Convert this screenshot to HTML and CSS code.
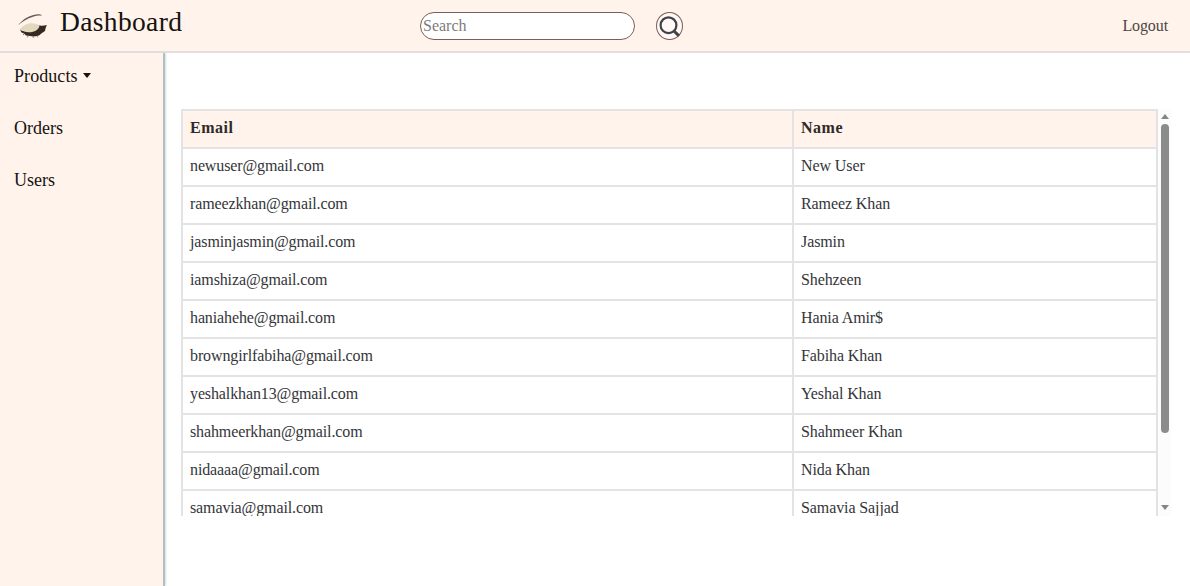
FILE: index.html
```html
<!DOCTYPE html>
<html lang="en">
<head>
<meta charset="utf-8">
<title>Dashboard</title>
<link rel="stylesheet" href="styles.css">
</head>
<body>
<header class="topbar">
  <div class="brand">
    <svg class="logo" width="32" height="28" viewBox="0 0 32 28">
      <defs><filter id="soft"><feGaussianBlur stdDeviation="0.45"/></filter></defs>
      <g filter="url(#soft)">
        <path d="M1 14.200C6 8 13 3.500 22 3.200C24 3.300 25 4 24.500 4.800C22 4.300 19 4.700 16 5.800C10 7.500 6 10.500 1 14.200Z" fill="#665a50"/>
        <path d="M3 18.500C8 21 14 21 18 18.500C21 17 19 14 20 14C24 15.200 27 14.800 29.800 14L28.500 17.500L28 20L25 22L22 24.500L17 25.500L13 25L9 24.500L7 22.500L4.500 21.500Z" fill="#352c24"/>
        <path d="M2.500 18.300C5 16.500 8 12.500 14 12.300C18 12 20.500 13.300 22.500 14.800C22 18.500 18 20.800 13.500 21.300C8.500 21.600 5 20 2.500 18.300Z" fill="#e2d9bd"/>
        <path d="M7 23l-1 1M11 25l-.5 1.300M16 25.500l.3 1.400M20 25l.8 1.300" stroke="#6d645a" stroke-width=".8"/>
      </g>
    </svg>
    <h1 class="title">Dashboard</h1>
  </div>
  <form class="search">
    <input class="search-input" type="text" placeholder="Search">
    <button class="search-button" type="button" aria-label="Search">
      <svg width="26" height="26" viewBox="0 0 26 26" fill="none">
        <circle cx="11.500" cy="12.200" r="7.900" stroke="#414247" stroke-width="2.200"/>
        <path d="M17 18L22 22.800" stroke="#414247" stroke-width="3"/>
      </svg>
    </button>
  </form>
  <a class="logout">Logout</a>
</header>
<div class="layout">
  <nav class="sidebar">
    <a class="nav-item">Products<span class="caret"></span></a>
    <a class="nav-item">Orders</a>
    <a class="nav-item">Users</a>
  </nav>
  <main class="content">
    <div class="table-scroll">
      <div class="table">
        <div class="row head"><div class="cell">Email</div><div class="cell">Name</div></div>
        <div class="row"><div class="cell">newuser@gmail.com</div><div class="cell">New User</div></div>
        <div class="row"><div class="cell">rameezkhan@gmail.com</div><div class="cell">Rameez Khan</div></div>
        <div class="row"><div class="cell">jasminjasmin@gmail.com</div><div class="cell">Jasmin</div></div>
        <div class="row"><div class="cell">iamshiza@gmail.com</div><div class="cell">Shehzeen</div></div>
        <div class="row"><div class="cell">haniahehe@gmail.com</div><div class="cell">Hania Amir$</div></div>
        <div class="row"><div class="cell">browngirlfabiha@gmail.com</div><div class="cell">Fabiha Khan</div></div>
        <div class="row"><div class="cell">yeshalkhan13@gmail.com</div><div class="cell">Yeshal Khan</div></div>
        <div class="row"><div class="cell">shahmeerkhan@gmail.com</div><div class="cell">Shahmeer Khan</div></div>
        <div class="row"><div class="cell">nidaaaa@gmail.com</div><div class="cell">Nida Khan</div></div>
        <div class="row"><div class="cell">samavia@gmail.com</div><div class="cell">Samavia Sajjad</div></div>
      </div>
      <div class="scrollbar">
        <span class="arrow up"></span>
        <span class="thumb"></span>
        <span class="arrow down"></span>
      </div>
    </div>
  </main>
</div>
</body>
</html>
```
FILE: styles.css
```css
* { box-sizing: border-box; }
body {
  margin: 0;
  height: 586px;
  overflow: hidden;
  display: flex;
  flex-direction: column;
  background: #fff;
  color: #343539;
  font-family: Georgia, "Liberation Serif", serif;
}
.topbar {
  display: grid;
  grid-template-columns: 420px 1fr auto;
  height: 53px;
  flex: none;
  padding-right: 22px;
  background: #fff3eb;
  border-bottom: 2px solid #e5dedc;
}
.brand { display: flex; padding: 11px 0 0 17px; }
.logo { flex: none; }
.title {
  margin: -5px 0 0 11px;
  font-size: 27.5px;
  line-height: 32px;
  font-weight: 400;
  letter-spacing: 0.35px;
  color: #15120f;
}
.search { display: flex; gap: 21px; padding-top: 12px; }
.search-input {
  width: 215px;
  height: 28px;
  padding: 0 2px;
  border: 1px solid #7a5e5b;
  border-radius: 14px;
  background: #fff;
  font: 16px Georgia, "Liberation Serif", serif;
}
.search-input::placeholder { color: #7d7b7b; opacity: 1; }
.search-button {
  width: 27px;
  height: 28px;
  padding: 0;
  display: flex;
  align-items: center;
  justify-content: center;
  border: 1px solid #7a5e5b;
  border-radius: 50%;
  background: #fff8f4;
}
.search-button svg { flex: none; }
.logout { padding-top: 16px; font-size: 16px; line-height: 20px; letter-spacing: -0.1px; color: #4d4744; }
.layout { display: flex; flex: 1; min-height: 0; }
.sidebar {
  width: 165px;
  display: flex;
  flex-direction: column;
  gap: 30px;
  padding: 12px 0 0 14px;
  background: #fff3eb;
  border-right: 2px solid #b3bebe;
  box-shadow: 1px 0 2px #d3e0e1;
}
.nav-item {
  display: flex;
  font-size: 18px;
  line-height: 22px;
  color: #15120f;
}
.nav-item:first-child { letter-spacing: 0.07px; }
.caret {
  margin: 8px 0 0 5px;
  width: 0;
  height: 0;
  border: 4.500px solid transparent;
  border-top: 5px solid #15120f;
  border-bottom: 0;
}
.content { flex: 1; padding: 56px 19px 0 16px; }
.table-scroll { display: flex; height: 407px; overflow: hidden; }
.table { flex: 1; border-left: 2px solid #e3e3e3; border-top: 2px solid #e3e3e3; }
.row { display: grid; grid-template-columns: 611px 1fr; height: 38px; }
.cell {
  padding: 7px 0 0 7px;
  border-right: 2px solid #e3e3e3;
  border-bottom: 2px solid #e3e3e3;
  font-size: 16px;
  line-height: 20px;
  letter-spacing: -0.12px;
}
.cell:last-child { letter-spacing: -0.1px; }
.head .cell { background: #fff3eb; font-weight: 700; letter-spacing: 0.5px; color: #302b2a; }
.scrollbar {
  width: 13px;
  display: flex;
  flex-direction: column;
  align-items: center;
  padding: 5px 0 6px;
  background: #fcfcfc;
}
.arrow { width: 0; height: 0; border: 4px solid transparent; }
.up { border-top: 0; border-bottom: 5px solid #858585; }
.down { border-bottom: 0; border-top: 5px solid #858585; margin-top: auto; }
.thumb { width: 8px; height: 309px; margin-top: 5px; border-radius: 4px; background: #8b8b8b; }
```
